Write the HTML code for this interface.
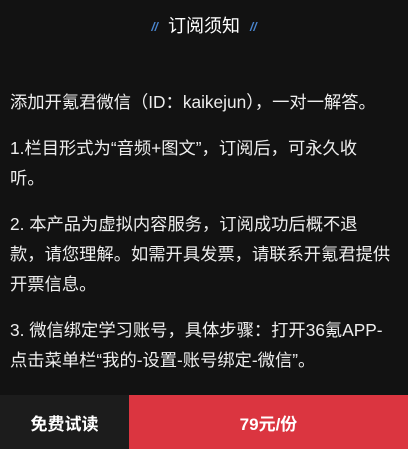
<!DOCTYPE html><html><head><meta charset="utf-8"><style>
body{margin:0;width:408px;height:449px;background:#121212;overflow:hidden;font-family:"Liberation Sans","Noto Sans CJK SC",sans-serif;color:#eee;position:relative}
.t{position:absolute;top:13px;left:0;width:408px;text-align:center;font-size:18px;color:#fff;line-height:26px}
.q{color:#4a86d0;font-style:italic;font-size:12px;margin:0 10px;font-weight:bold;vertical-align:1px}
.c{position:absolute;left:10px;top:87px;font-size:17.3px;line-height:30px;white-space:nowrap;letter-spacing:0}
.c p{margin:0 0 16px}
.f{position:absolute;top:395px;left:0;width:408px;height:54px;display:flex;font-weight:bold;font-size:17px;color:#fff}
.a{width:129px;background:#1c1c1c;display:flex;align-items:center;justify-content:center}
.b{flex:1;background:#db3540;display:flex;align-items:center;justify-content:center}
</style></head><body>
<div class="t"><span class="q">//</span>订阅须知<span class="q">//</span></div>
<div class="c">
<p>添加开氪君微信（ID：kaikejun），一对一解答。</p>
<p>1.栏目形式为“音频+图文”，订阅后，可永久收<br>听。</p>
<p>2. 本产品为虚拟内容服务，订阅成功后概不退<br>款，请您理解。如需开具发票，请联系开氪君提供<br>开票信息。</p>
<p>3. 微信绑定学习账号，具体步骤：打开36氪APP-<br>点击菜单栏“我的-设置-账号绑定-微信”。</p>
</div>
<div class="f"><div class="a">免费试读</div><div class="b">79元/份</div></div>
</body></html>
